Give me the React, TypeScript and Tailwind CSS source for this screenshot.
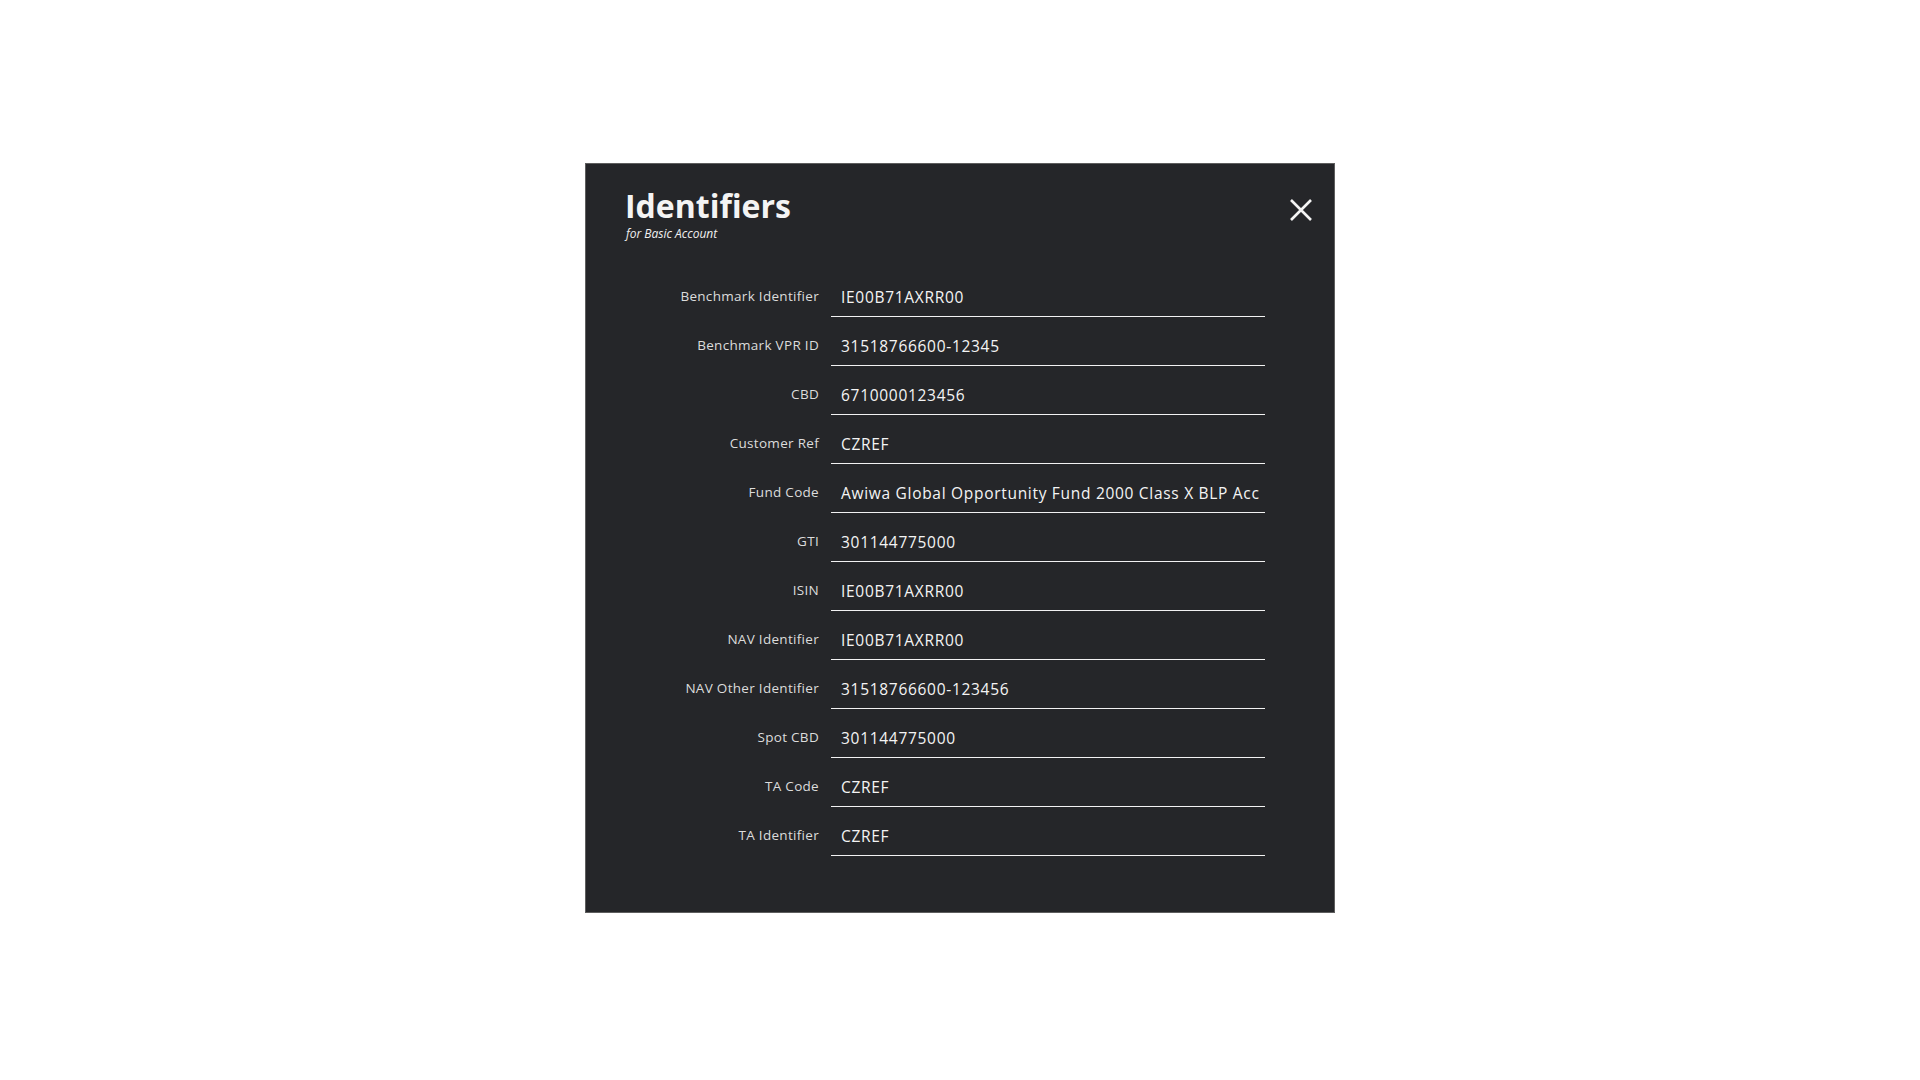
import React from "react";

const rows: [string, string][] = [
  ["Benchmark Identifier", "IE00B71AXRR00"],
  ["Benchmark VPR ID", "31518766600-12345"],
  ["CBD", "6710000123456"],
  ["Customer Ref", "CZREF"],
  ["Fund Code", "Awiwa Global Opportunity Fund 2000 Class X BLP Acc"],
  ["GTI", "301144775000"],
  ["ISIN", "IE00B71AXRR00"],
  ["NAV Identifier", "IE00B71AXRR00"],
  ["NAV Other Identifier", "31518766600-123456"],
  ["Spot CBD", "301144775000"],
  ["TA Code", "CZREF"],
  ["TA Identifier", "CZREF"],
];

export default function App() {
  return (
    <div
      className="min-h-screen w-full bg-white pt-[163px]"
      style={{ fontFamily: '"Open Sans", "Noto Sans", sans-serif' }}
    >
      <div className="mx-auto h-[750px] w-[750px] border border-[#5e5e5e] bg-[#252629]">
        <div className="flex items-start justify-between pl-[39px] pr-[21px] pt-[23px]">
          <div>
            <h1 className="text-[32px] font-bold leading-[38px] text-[#f4f4f4]">Identifiers</h1>
            <p className="ml-[1px] mt-[1px] text-[12px] italic leading-[16px] text-[#f0f0f0]">for Basic Account</p>
          </div>
          <button className="mt-[11px] flex h-[24px] w-[24px] items-center justify-center text-[#f4f4f4]" aria-label="Close">
            <svg width="24" height="24" viewBox="0 0 24 24" fill="none">
              <path d="M2 2L22 22M22 2L2 22" stroke="currentColor" strokeWidth="2.6" strokeLinecap="butt" />
            </svg>
          </button>
        </div>
        <div className="mt-[40px] flex flex-col gap-[14px] pl-[40px]">
          {rows.map(([label, value]) => (
            <div key={label} className="flex items-start gap-[12px]">
              <div className="w-[193px] pt-[5px] text-right text-[13.5px] leading-[18px] tracking-[0.3px] text-[#dcdcdc]">{label}</div>
              <div className="h-[35px] w-[434px] overflow-hidden whitespace-nowrap border-b border-[#f2f2f2] pl-[10px] pt-[4px] text-[15.5px] leading-[22px] tracking-[0.7px] text-[#f4f4f4]">
                {value}
              </div>
            </div>
          ))}
        </div>
      </div>
    </div>
  );
}
